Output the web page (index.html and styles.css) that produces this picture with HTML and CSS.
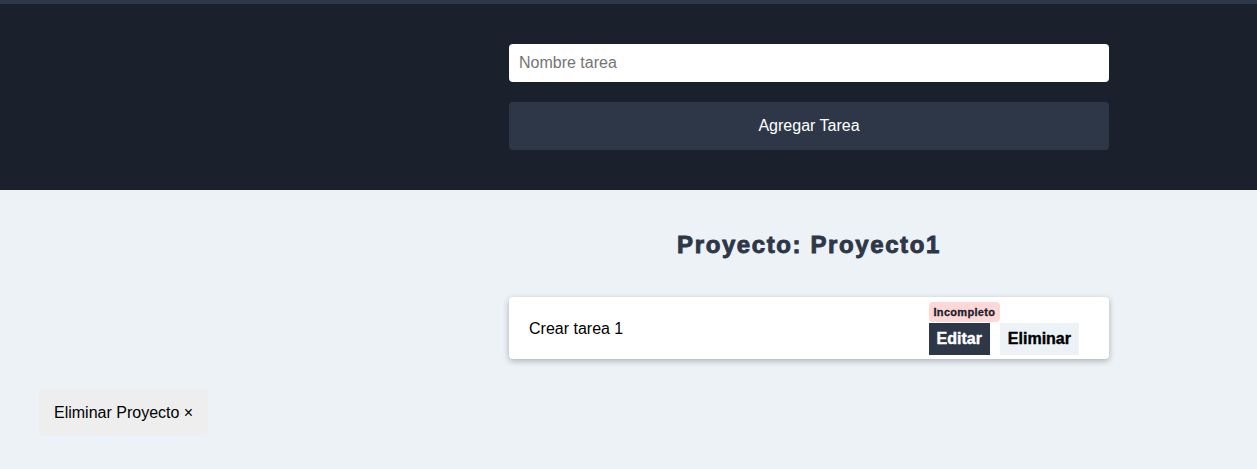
FILE: index.html
```html
<!DOCTYPE html>
<html lang="es">
<head>
<meta charset="utf-8">
<title>Proyecto</title>
<link rel="stylesheet" href="styles.css">
</head>
<body>
<div class="topbar"></div>
<header class="header">
  <form class="wrap task-form">
    <input class="task-input" type="text" placeholder="Nombre tarea">
    <button class="add-btn" type="button">Agregar Tarea</button>
  </form>
</header>
<main class="main">
  <section class="wrap">
    <h2 class="title">Proyecto: Proyecto1</h2>
    <ul class="tasks">
      <li class="task">
        <p class="task-name">Crear tarea 1</p>
        <div class="task-actions">
          <span class="badge">Incompleto</span>
          <div class="btns">
            <button class="btn btn-edit" type="button">Editar</button>
            <button class="btn btn-del" type="button">Eliminar</button>
          </div>
        </div>
      </li>
    </ul>
  </section>
  <div class="project-actions">
    <button class="del-project" type="button">Eliminar Proyecto &times;</button>
  </div>
</main>
</body>
</html>
```

FILE: styles.css
```css
* { box-sizing: border-box; }
html, body { margin: 0; padding: 0; }
body {
  font-family: "Liberation Sans", Arial, sans-serif;
  background: #edf2f7;
  color: #000;
  height: 469px;
  overflow: hidden;
}
.topbar { height: 4px; background: #2d3748; }
.header {
  background: #1a202c;
  padding: 40px 0 40px;
}
.wrap {
  width: 600px;
  margin-left: 509px;
}
.task-form {
  display: flex;
  flex-direction: column;
  gap: 20px;
  margin-top: 0;
  margin-bottom: 0;
}
.task-input {
  height: 38px;
  border: none;
  border-radius: 4px;
  background: #fff;
  padding: 0 10px;
  font-family: "Liberation Sans", Arial, sans-serif;
  font-size: 16px;
  color: #000;
  outline: none;
}
.task-input::placeholder { color: #757575; }
.add-btn {
  height: 48px;
  border: none;
  border-radius: 4px;
  background: #2d3748;
  color: #fff;
  font-family: "Liberation Sans", Arial, sans-serif;
  font-size: 16px;
}
.main { padding-top: 41px; }
.title {
  margin: 0 0 38px;
  text-align: center;
  font-size: 24px;
  line-height: 28px;
  font-weight: 700;
  letter-spacing: 1.6px;
  -webkit-text-stroke: 0.9px #2d3748;
  color: #2d3748;
}
.tasks { list-style: none; margin: 0; padding: 0; }
.task {
  display: flex;
  align-items: center;
  justify-content: space-between;
  background: #fff;
  border-radius: 4px;
  box-shadow: 0 2px 6px rgba(0, 0, 0, 0.28);
  padding: 5px 30px 4px 20px;
}
.task-name { margin: 0; font-size: 16px; }
.task-actions {
  display: flex;
  flex-direction: column;
  align-items: flex-start;
  gap: 1px;
}
.badge {
  display: inline-block;
  background: #fed7d7;
  color: #1a202c;
  font-size: 11px;
  font-weight: 700;
  line-height: 20px;
  height: 20px;
  padding: 0 5px;
  border-radius: 4px;
  letter-spacing: 0.3px;
  -webkit-text-stroke: 0.3px #1a202c;
}
.btns { display: flex; gap: 10px; }
.btn {
  border: none;
  border-radius: 0;
  font-family: "Liberation Sans", Arial, sans-serif;
  font-size: 16px;
  font-weight: 700;
  height: 32px;
  padding: 0 8px;
}
.btn-edit { background: #2d3748; color: #fff; -webkit-text-stroke: 0.4px #fff; }
.btn-del { background: #edf2f7; color: #000; -webkit-text-stroke: 0.4px #000; }
.project-actions { padding: 30px 0 0 39px; }
.del-project {
  height: 47px;
  padding: 1px 15px 0;
  border: none;
  border-radius: 4px;
  background: #eeeeee;
  color: #000;
  font-family: "Liberation Sans", Arial, sans-serif;
  font-size: 16px;
}
```
